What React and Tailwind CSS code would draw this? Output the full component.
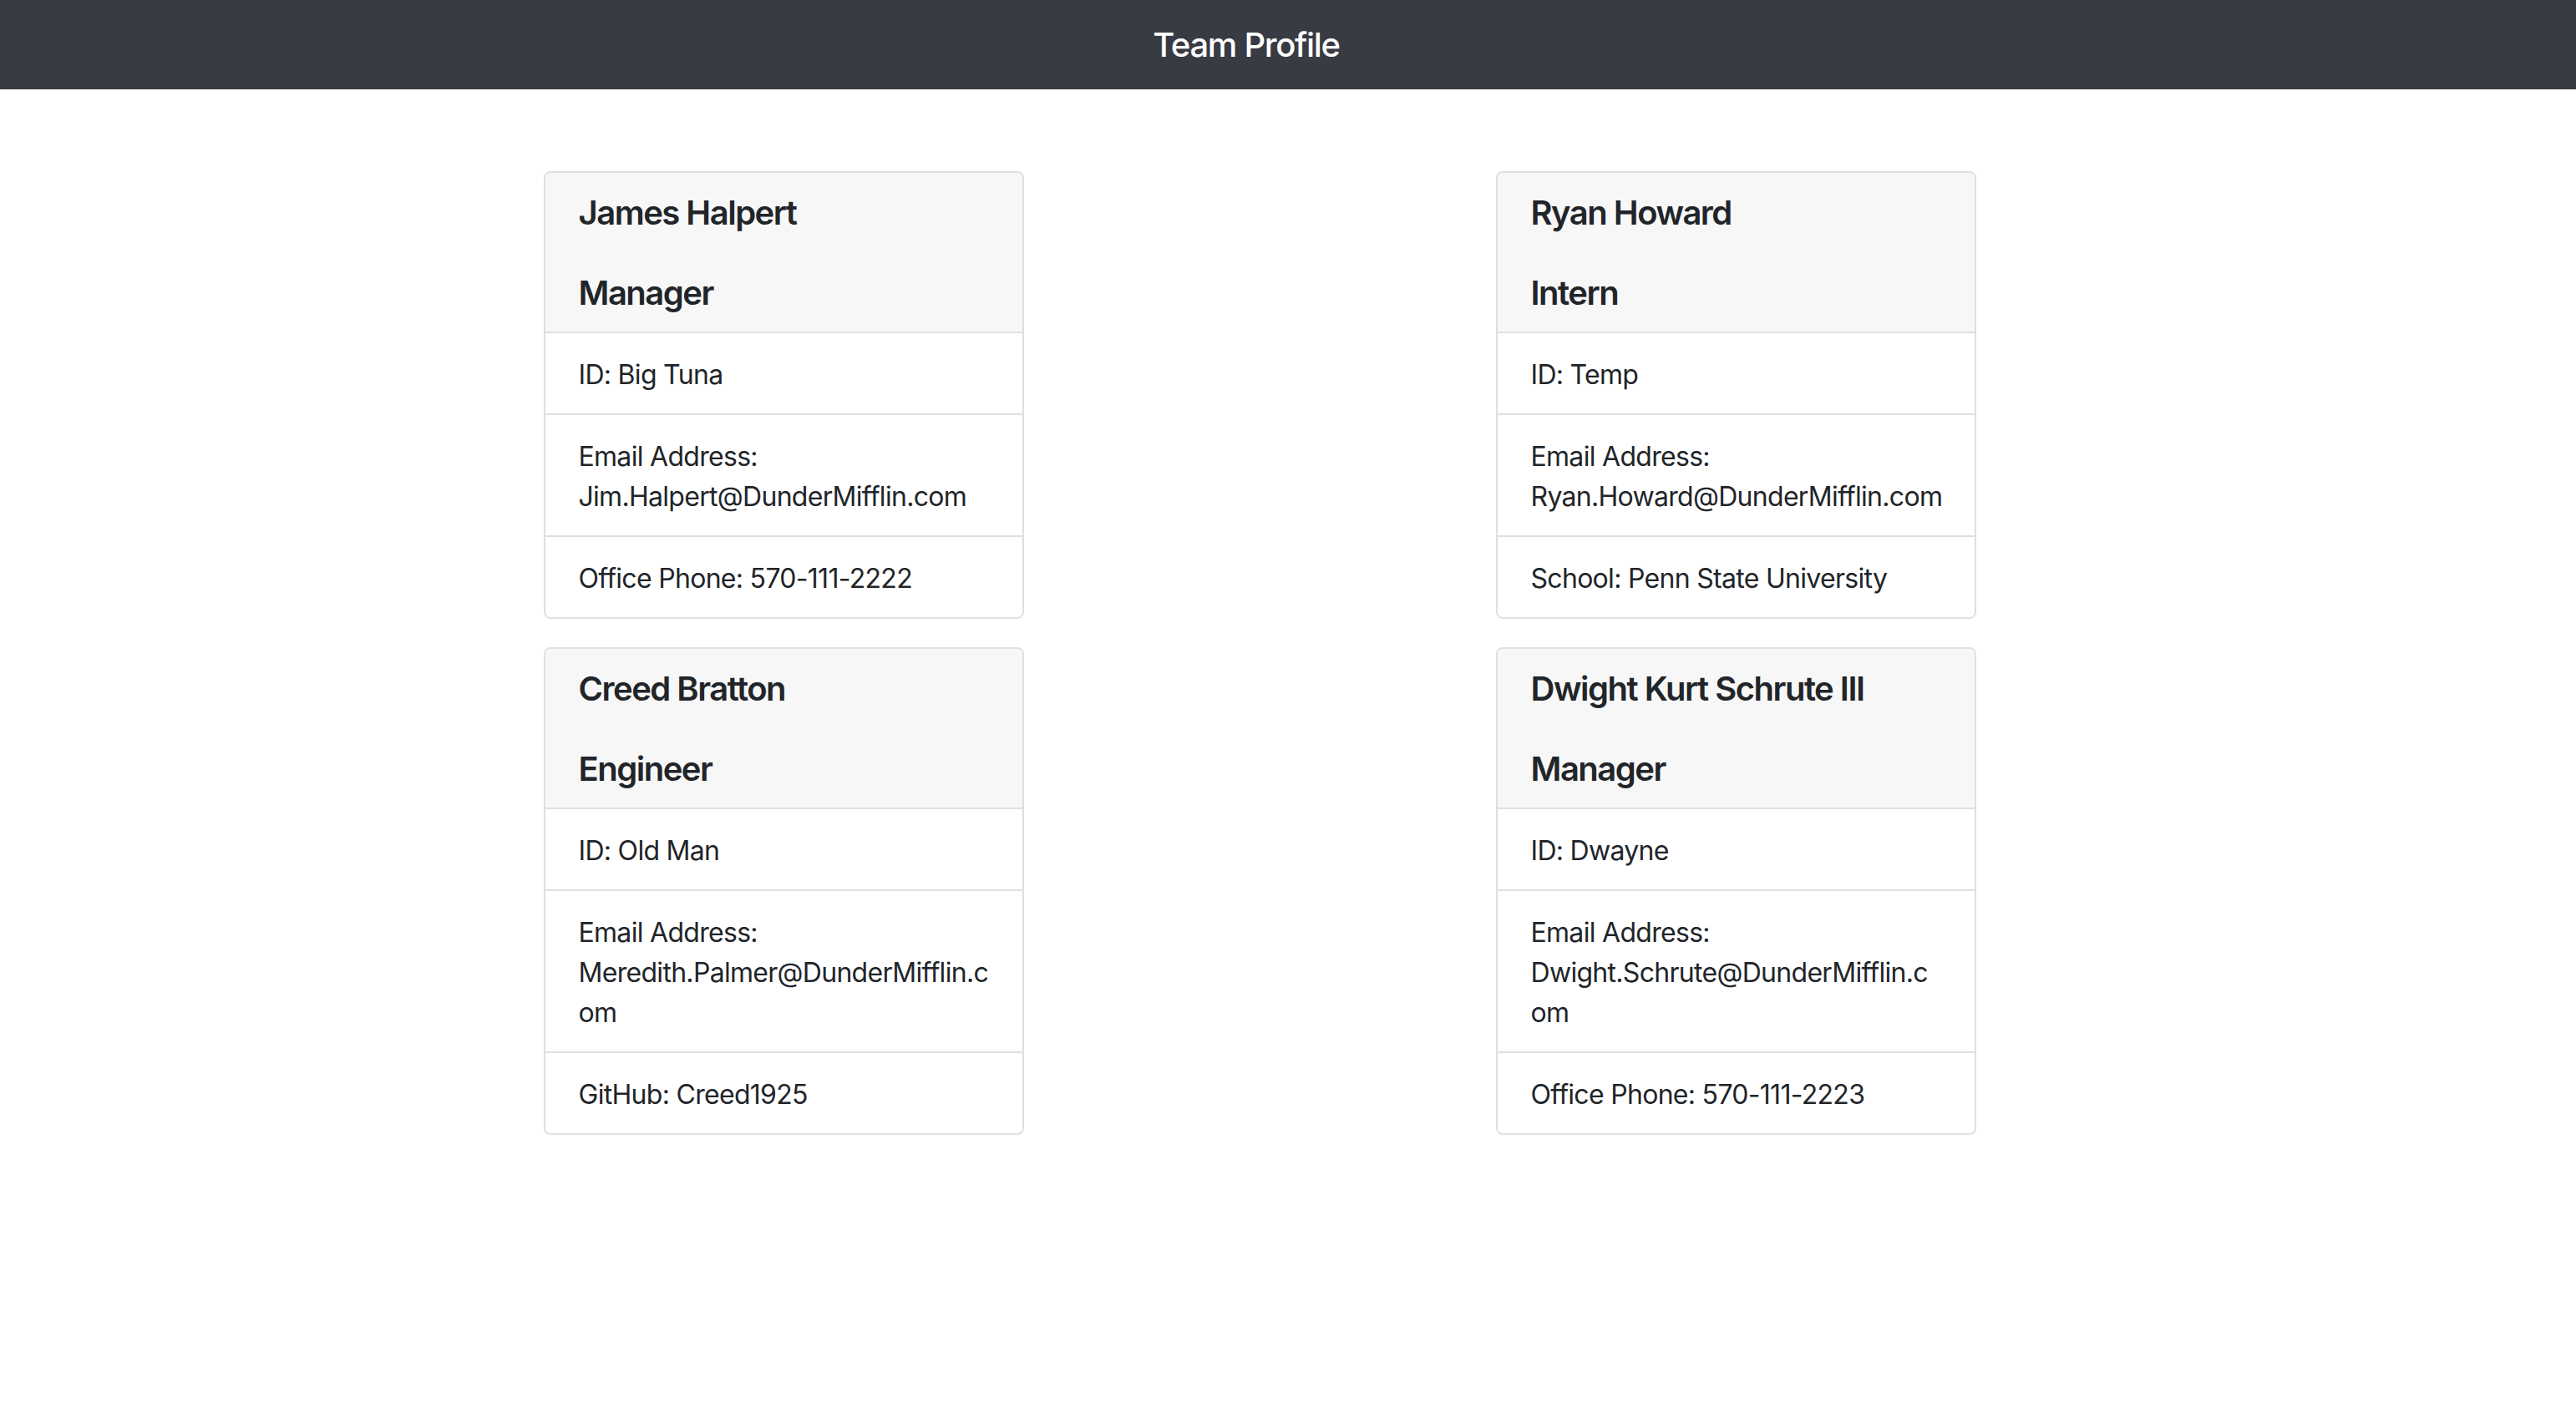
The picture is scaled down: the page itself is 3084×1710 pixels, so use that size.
const team = [
  {
    name: 'James Halpert',
    role: 'Manager',
    id: 'Big Tuna',
    email: ['Jim.Halpert@DunderMifflin.com'],
    extra: 'Office Phone: 570-111-2222',
  },
  {
    name: 'Ryan Howard',
    role: 'Intern',
    id: 'Temp',
    email: ['Ryan.Howard@DunderMifflin.com'],
    extra: 'School: Penn State University',
  },
  {
    name: 'Creed Bratton',
    role: 'Engineer',
    id: 'Old Man',
    email: ['Meredith.Palmer@DunderMifflin.c', 'om'],
    extra: 'GitHub: Creed1925',
  },
  {
    name: 'Dwight Kurt Schrute III',
    role: 'Manager',
    id: 'Dwayne',
    email: ['Dwight.Schrute@DunderMifflin.c', 'om'],
    extra: 'Office Phone: 570-111-2223',
  },
];

const EmployeeCard = ({ member }) => (
  <div className="w-[575px] rounded-[8px] border-2 border-[#dfdfdf] bg-white overflow-hidden">
    <div className="bg-[#f7f7f7] px-[40px] pt-[24px] pb-[22px] border-b-2 border-[#dfdfdf]">
      <h2 className="text-[40px] leading-[48px] font-semibold tracking-[-1.5px]">{member.name}</h2>
      <h3 className="mt-[48px] text-[40px] leading-[48px] font-semibold tracking-[-1.5px]">{member.role}</h3>
    </div>
    <ul className="text-[32px] leading-[48px] tracking-[-0.7px]">
      <li className="px-[40px] pt-[26px] pb-[22px] border-b-2 border-[#dfdfdf]">ID: {member.id}</li>
      <li className="px-[40px] pt-[26px] pb-[22px] border-b-2 border-[#dfdfdf]">
        Email Address:
        {member.email.map((line) => (
          <span key={line} className="block">{line}</span>
        ))}
      </li>
      <li className="px-[40px] pt-[26px] pb-[22px]">{member.extra}</li>
    </ul>
  </div>
);

export default function App() {
  return (
    <div className="min-h-screen bg-white text-[#212529] font-['Inter','Liberation_Sans',sans-serif]">
      <header className="h-[107px] bg-[#383b43] flex items-center justify-center pr-[100px]">
        <h1 className="text-white text-[40px] font-medium tracking-[-1.3px]">Team Profile</h1>
      </header>

      <main className="pt-[98px]">
        <div className="ml-[368px] w-[2280px] grid grid-cols-2 gap-y-[34px] justify-items-center items-start">
          {team.map((member) => (
            <EmployeeCard key={member.name} member={member} />
          ))}
        </div>
      </main>
    </div>
  );
}
